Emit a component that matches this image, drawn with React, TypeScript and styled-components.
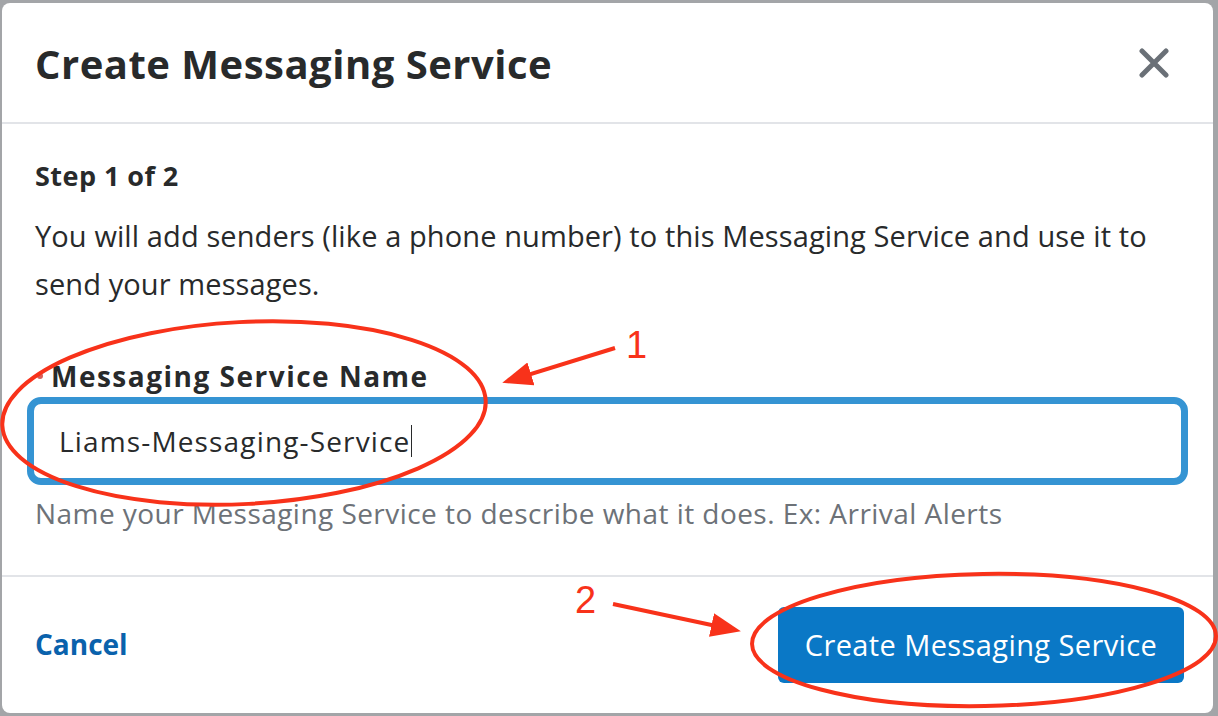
import React from "react";
import styled, { createGlobalStyle } from "styled-components";

const Global = createGlobalStyle`
  html, body { margin: 0; padding: 0; }
  body {
    background: #a3a5a8;
    font-family: "Open Sans", "Noto Sans", sans-serif;
    color: #282a2b;
  }
  * { box-sizing: border-box; }
`;

const Frame = styled.div`
  position: relative;
  width: 1218px;
  height: 716px;
  padding: 3px 5px 3px 2px;
  background: #a3a5a8;
`;

const Card = styled.div`
  width: 100%;
  height: 100%;
  background: #ffffff;
  border-radius: 8px;
  display: flex;
  flex-direction: column;
  overflow: hidden;
`;

const Header = styled.header`
  height: 121px;
  flex: none;
  display: flex;
  align-items: center;
  justify-content: space-between;
  padding: 0 44px 0 33px;
  border-bottom: 2px solid #e2e4e8;
`;

const Title = styled.h1`
  margin: 3px 0 0;
  font-size: 40px;
  font-weight: 700;
  letter-spacing: 0.5px;
  line-height: 48px;
  color: #282a2b;
`;

const CloseButton = styled.button`
  border: none;
  background: none;
  padding: 0;
  width: 30px;
  height: 30px;
  display: flex;
  align-items: center;
  justify-content: center;
  cursor: pointer;
`;

const Body = styled.section`
  flex: 1;
  display: flex;
  flex-direction: column;
  padding: 34px 33px 0 33px;
  border-bottom: 2px solid #e2e4e8;
`;

const Step = styled.div`
  font-size: 27px;
  font-weight: 700;
  letter-spacing: 0.45px;
  line-height: 36px;
`;

const Paragraph = styled.p`
  margin: 18px 0 0;
  font-size: 29px;
  letter-spacing: 0.1px;
  line-height: 48px;
  font-weight: 400;
`;

const Label = styled.label`
  margin-top: 48px;
  display: flex;
  align-items: center;
  font-size: 28px;
  letter-spacing: 1.5px;
  line-height: 40px;
  font-weight: 700;
`;

const RequiredDot = styled.span`
  flex: none;
  width: 6px;
  height: 6px;
  border-radius: 50%;
  background: #d8605b;
  margin: 0 8px 0 2px;
`;

const InputBox = styled.div`
  margin: 1px -8px 0 -8px;
  height: 88px;
  border: 7px solid #3594d3;
  border-radius: 14px;
  display: flex;
  align-items: center;
  padding-left: 25px;
  font-size: 28px;
  letter-spacing: 1.15px;
  color: #282a2b;
`;

const Caret = styled.span`
  display: inline-block;
  width: 1.5px;
  height: 32px;
  background: #282a2b;
`;

const Helper = styled.div`
  margin-top: 8px;
  font-size: 28px;
  letter-spacing: 0.45px;
  line-height: 40px;
  color: #6d7278;
`;

const Footer = styled.footer`
  height: 136px;
  flex: none;
  display: flex;
  align-items: center;
  justify-content: space-between;
  padding: 0 29px 0 33px;
`;

const CancelLink = styled.a`
  font-size: 28px;
  font-weight: 700;
  color: #0a62ac;
  text-decoration: none;
  cursor: pointer;
  margin-top: -2px;
`;

const PrimaryButton = styled.button`
  width: 406px;
  height: 76px;
  border: none;
  border-radius: 6px;
  background: #0a78c6;
  color: #ffffff;
  font-family: inherit;
  font-size: 29px;
  letter-spacing: 0.4px;
  font-weight: 400;
  line-height: 1;
  padding-bottom: 3px;
  cursor: pointer;
`;

const Annotations = styled.svg`
  position: absolute;
  left: 0;
  top: 0;
  width: 1218px;
  height: 716px;
  pointer-events: none;
`;

const AnnoNum = styled.text`
  font-family: "Liberation Sans", Arial, sans-serif;
  font-size: 38px;
  fill: #f8321a;
`;

export default function App() {
  const red = "#f8321a";
  return (
    <>
      <Global />
      <Frame>
        <Card>
          <Header>
            <Title>Create Messaging Service</Title>
            <CloseButton aria-label="Close">
              <svg width="30" height="30" viewBox="0 0 30 30">
                <path d="M3 3 L27 27 M27 3 L3 27" stroke="#6a7077" strokeWidth="5" strokeLinecap="round" />
              </svg>
            </CloseButton>
          </Header>
          <Body>
            <Step>Step 1 of 2</Step>
            <Paragraph>
              You will add senders (like a phone number) to this Messaging Service and use it to send your messages.
            </Paragraph>
            <Label>
              <RequiredDot />
              Messaging Service Name
            </Label>
            <InputBox>
              Liams-Messaging-Service
              <Caret />
            </InputBox>
            <Helper>Name your Messaging Service to describe what it does. Ex: Arrival Alerts</Helper>
          </Body>
          <Footer>
            <CancelLink>Cancel</CancelLink>
            <PrimaryButton>Create Messaging Service</PrimaryButton>
          </Footer>
        </Card>
        <Annotations viewBox="0 0 1218 716">
          <defs>
            <marker id="ah" viewBox="0 0 10 8" refX="8" refY="4" markerWidth="7.5" markerHeight="6" orient="auto">
              <path d="M0 0 L10 4 L0 8 z" fill={red} />
            </marker>
          </defs>
          <ellipse cx="244" cy="413" rx="242" ry="91" fill="none" stroke={red} strokeWidth="4" transform="rotate(-3 244 413)" />
          <line x1="615" y1="348" x2="508" y2="381" stroke={red} strokeWidth="4" markerEnd="url(#ah)" />
          <AnnoNum x="626" y="358">1</AnnoNum>
          <ellipse cx="984" cy="640" rx="232" ry="66" fill="none" stroke={red} strokeWidth="4" transform="rotate(-1 984 640)" />
          <line x1="613" y1="604" x2="735" y2="630" stroke={red} strokeWidth="4" markerEnd="url(#ah)" />
          <AnnoNum x="575" y="613">2</AnnoNum>
        </Annotations>
      </Frame>
    </>
  );
}
